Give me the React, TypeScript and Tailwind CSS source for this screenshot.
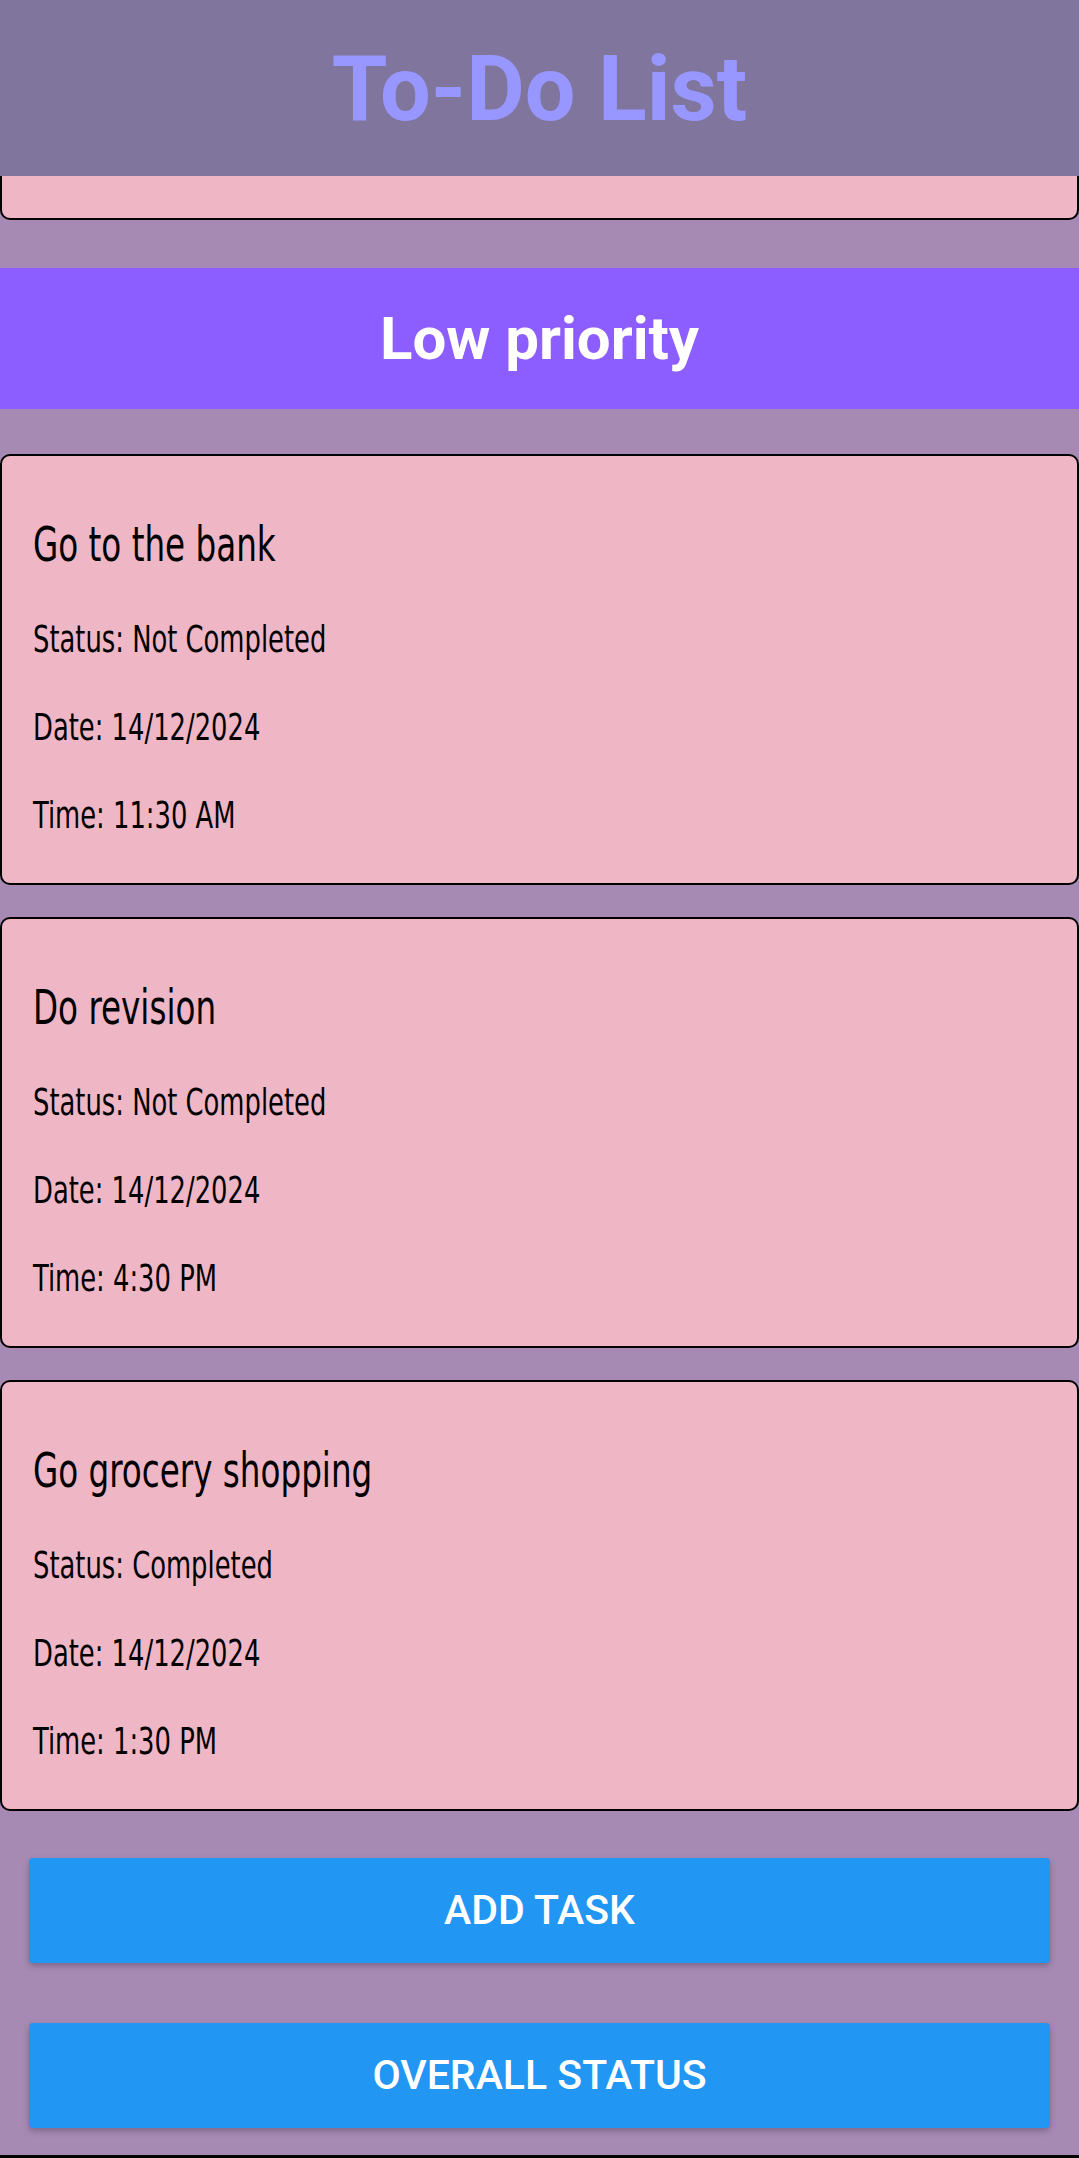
const tasks = [
  { title: "Go to the bank", status: "Not Completed", date: "14/12/2024", time: "11:30 AM" },
  { title: "Do revision", status: "Not Completed", date: "14/12/2024", time: "4:30 PM" },
  { title: "Go grocery shopping", status: "Completed", date: "14/12/2024", time: "1:30 PM" },
];

// no Oswald offline: DejaVu condensed squeezed a bit more
const condensed = "font-['DejaVu_Sans_Condensed','DejaVu_Sans',sans-serif] font-stretch-condensed";
const line = "block origin-left scale-x-[0.755] whitespace-nowrap";

const TaskCard = ({ title, status, date, time }: (typeof tasks)[number]) => {
  return (
    <div className={`h-[431px] w-full rounded-[10px] border-2 border-black bg-[#efb6c6] pl-[31px] pt-[65px] text-black ${condensed}`}>
      <h3 className={`text-[48px] leading-[46px] ${line}`}>{title}</h3>
      <p className={`mt-[54px] text-[38px] leading-[36px] ${line}`}>Status: {status}</p>
      <p className={`mt-[52px] text-[38px] leading-[36px] ${line}`}>Date: {date}</p>
      <p className={`mt-[52px] text-[38px] leading-[36px] ${line}`}>Time: {time}</p>
    </div>
  );
};

export default function App() {
  return (
    <div className="flex min-h-[2158px] w-[1079px] flex-col bg-[#a78ab4] font-['Roboto',sans-serif]">
      <header className="flex h-[176px] items-center justify-center bg-[#80759d] pt-[4px]">
        <h1 className="text-[90px] font-bold leading-none text-[#9797ff]">To-Do List</h1>
      </header>

      <div className="h-[44px] w-full rounded-b-[10px] border-x-2 border-b-2 border-black bg-[#efb6c6]" />

      <div className="mt-[48px] flex h-[141px] items-center justify-center bg-[#8c5dff]">
        <h2 className="text-[60px] font-bold leading-none text-white">Low priority</h2>
      </div>

      <div className="mt-[45px] flex flex-col gap-[32px]">
        {tasks.map((t) => (
          <TaskCard key={t.title} {...t} />
        ))}
      </div>

      <div className="mt-[47px] flex flex-col gap-[60px] px-[29px]">
        <button className="h-[105px] w-full rounded-[4px] bg-[#2196f3] text-[41px] font-medium text-white shadow-[0_3px_6px_rgba(0,0,0,0.25)]">
          ADD TASK
        </button>
        <button className="h-[105px] w-full rounded-[4px] bg-[#2196f3] text-[41px] font-medium text-white shadow-[0_3px_6px_rgba(0,0,0,0.25)]">
          OVERALL STATUS
        </button>
      </div>

      <div className="mt-auto h-[3px] bg-black" />
    </div>
  );
}
